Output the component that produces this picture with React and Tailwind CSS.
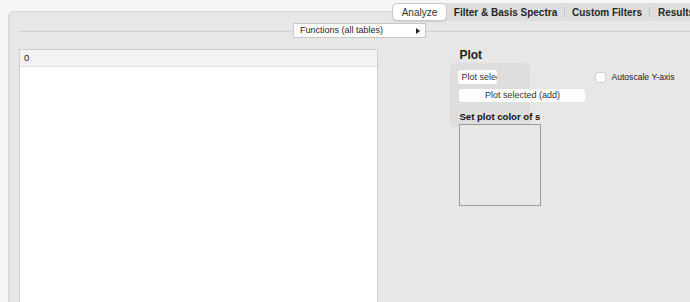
import React from 'react'

const tabs = [
    { label: 'Analyze', w: 'w-[55px]' },
    { label: 'Filter & Basis Spectra', w: 'w-[117px]' },
    { label: 'Custom Filters', w: 'w-[84px]' },
    { label: 'Results', w: 'w-[52px]' },
]

const App = () => {
    return (
        <div className="relative w-[690px] h-[302px] overflow-hidden bg-[#f6f6f6] text-[#222] font-['Liberation_Sans',Arial,sans-serif]">
            {/* Tab segmented control */}
            <div className="absolute top-[3px] left-[392px] z-10 flex items-center h-[18px] rounded-[5px] bg-[#dedede] text-[10px] whitespace-nowrap">
                {tabs.map((t, i) => (
                    <React.Fragment key={t.label}>
                        {i === 0 ? (
                            <div className={`${t.w} h-[18px] flex items-center justify-center rounded-[5px] bg-white border border-[#c9c9c9] shadow-[0_1px_1px_rgba(0,0,0,0.1)] text-[#333]`}>{t.label}</div>
                        ) : (
                            <div className={`${t.w} flex justify-center text-[10px] font-semibold text-[#262626]`}>{t.label}</div>
                        )}
                        {i > 0 && i < tabs.length - 1 && <div className="w-px h-[10px] bg-[#c4c4c4]" />}
                    </React.Fragment>
                ))}
            </div>

            {/* Main panel */}
            <div className="ml-[8px] mt-[11px] h-[300px] rounded-tl-[6px] border-t border-l border-[#d4d4d4] bg-[#e7e7e7] pl-[10px]">
                {/* Functions line */}
                <div className="relative h-[15px] mt-[11px]">
                    <div className="absolute left-0 right-0 top-[8px] h-px bg-[#d0d0d0]" />
                    <div className="relative ml-[274px] w-[133px] h-[15px] bg-white border border-[#c8c8c8] flex items-center justify-between pl-[6px] pr-[5px] text-[9px] text-[#1e1e1e]">
                        <span>Functions (all tables)</span>
                        <span className="w-0 h-0 border-y-[3px] border-y-transparent border-l-[4px] border-l-[#222]" />
                    </div>
                </div>

                <div className="flex mt-[11px]">
                    {/* Table */}
                    <div className="w-[360px] h-[260px] bg-white border border-[#cfcfcf] flex flex-col">
                        <div className="h-[17px] bg-[#f3f3f3] border-b border-[#e2e2e2] flex items-center pl-[4px] text-[9.5px]">0</div>
                        <div className="flex-1 bg-white" />
                    </div>

                    {/* Plot controls */}
                    <div className="relative ml-[72px] w-[240px]">
                        <div className="absolute left-[0px] top-[14px] w-[80px] h-[64px] rounded-[5px] bg-[#dcdcdc]/80" />
                        <div className="relative pl-[9px]">
                            <div className="h-[14px] mt-[-2px] text-[12px] font-bold text-[#222] leading-none flex items-end">Plot</div>
                            <div className="flex items-start mt-[6px]">
                                <div className="w-[128px]">
                                    <div className="w-[39px] h-[14px] mt-[3px] ml-[-1px] rounded-[3px] bg-white overflow-hidden whitespace-nowrap text-[9px] pl-[3px] leading-[14px] text-[#333]">Plot selected</div>
                                    <div className="w-[126px] h-[13px] mt-[5px] rounded-[3px] bg-white text-center text-[9px] leading-[13px] text-[#333]">Plot selected (add)</div>
                                    <div className="w-[81px] mt-[9px] overflow-hidden whitespace-nowrap text-[9.6px] font-bold text-[#111] leading-[12px]">Set plot color of selected</div>
                                    <div className="w-[82px] h-[82px] mt-[1px] border border-[#9c9c9c] bg-[#e8e8e8]" />
                                </div>
                                <div className="ml-[8px] flex items-center gap-[5px] mt-[4px]">
                                    <div className="w-[11px] h-[11px] rounded-[3px] bg-white border border-[#d0d0d0]" />
                                    <span className="text-[8.6px] text-[#222] whitespace-nowrap">Autoscale Y-axis</span>
                                </div>
                            </div>
                        </div>
                    </div>
                </div>
            </div>
        </div>
    )
}

export default App
